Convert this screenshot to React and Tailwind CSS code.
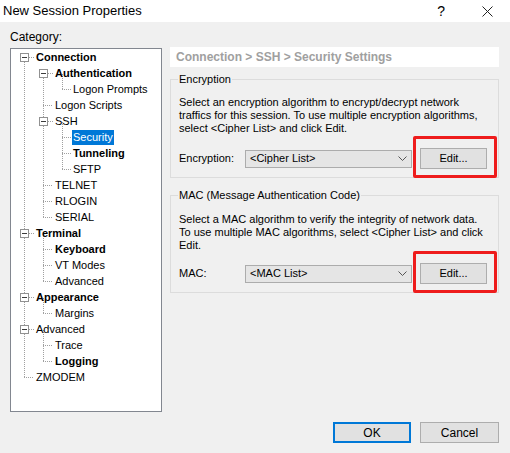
import React from "react";

const rows = [
  { t: "Connection", l: 0, b: true },
  { t: "Authentication", l: 1, b: true },
  { t: "Logon Prompts", l: 2 },
  { t: "Logon Scripts", l: 1 },
  { t: "SSH", l: 1 },
  { t: "Security", l: 2, sel: true },
  { t: "Tunneling", l: 2, b: true },
  { t: "SFTP", l: 2 },
  { t: "TELNET", l: 1 },
  { t: "RLOGIN", l: 1 },
  { t: "SERIAL", l: 1 },
  { t: "Terminal", l: 0, b: true },
  { t: "Keyboard", l: 1, b: true },
  { t: "VT Modes", l: 1 },
  { t: "Advanced", l: 1 },
  { t: "Appearance", l: 0, b: true },
  { t: "Margins", l: 1 },
  { t: "Advanced", l: 0 },
  { t: "Trace", l: 1 },
  { t: "Logging", l: 1, b: true },
  { t: "ZMODEM", l: 0 },
];

const indent = ["pl-[24px]", "pl-[43px]", "pl-[61px]"];

const cy = (i) => 8 + 16 * i + 0.5;

// tree connector lines + expander boxes
const TreeLines = () => {
  const v = [
    [13, 0, 20],
    [32, 1, 10],
    [32, 11, 14],
    [32, 15, 16],
    [32, 17, 19],
    [51, 1, 2],
    [51, 4, 7],
  ];
  const h = [
    [18, 23, [0, 11, 15, 17]],
    [13, 23, [20]],
    [37, 42, [1, 4]],
    [32, 42, [3, 8, 9, 10, 12, 13, 14, 16, 18, 19]],
    [51, 60, [2, 5, 6, 7]],
  ];
  const boxes = [
    [9, 0], [9, 11], [9, 15], [9, 17],
    [28, 1], [28, 4],
  ];
  return (
    <svg className="absolute inset-0 pointer-events-none" width="150" height="362" shapeRendering="crispEdges">
      {v.map(([x, a, b], k) => (
        <line key={"v" + k} x1={x + 0.5} x2={x + 0.5} y1={cy(a)} y2={cy(b)} stroke="#a0a0a0" strokeDasharray="1 1" />
      ))}
      {h.flatMap(([x1, x2, list], k) =>
        list.map((i) => (
          <line key={"h" + k + "-" + i} x1={x1} x2={x2} y1={cy(i)} y2={cy(i)} stroke="#a0a0a0" strokeDasharray="1 1" />
        ))
      )}
      {boxes.map(([x, i], k) => (
        <g key={"b" + k}>
          <rect x={x + 0.5} y={cy(i) - 4} width="8" height="8" fill="#fff" stroke="#919191" />
          <line x1={x + 2} x2={x + 7} y1={cy(i)} y2={cy(i)} stroke="#3c3c3c" />
        </g>
      ))}
    </svg>
  );
};

const Chevron = () => (
  <svg width="9" height="5" viewBox="0 0 9 5" className="mr-[4px]">
    <polyline points="0.5,0.5 4.5,4.5 8.5,0.5" fill="none" stroke="#555" />
  </svg>
);

const Row = ({ label, value }) => (
  <div className="flex items-center h-[21px]">
    <span className="w-[66px]">{label}</span>
    <div className="w-[167px] h-[18px] border border-[#acacac] bg-[#e5e5e5] flex items-center justify-between pl-[4px]">
      <span>{value}</span>
      <Chevron />
    </div>
    <div className="relative ml-[8px]">
      <button className="w-[67px] h-[21px] border border-[#adadad] bg-[#e1e1e1] text-black">Edit...</button>
      <div className="absolute -left-[7px] -top-[12px] -right-[10px] -bottom-[9px] border-[3px] border-[#ee1c1c] rounded-[2px]" />
    </div>
  </div>
);

export default function App() {
  return (
    <div className="w-[510px] h-[453px] bg-[#f0f0f0] flex flex-col font-['Liberation_Sans',Arial,sans-serif] text-[11px] text-black overflow-hidden">
      <div className="h-[22px] bg-white flex items-center shrink-0">
        <span className="pl-[3px] text-[13px] flex-1">New Session Properties</span>
        <span className="text-[14px] mr-[37px]">?</span>
        <svg width="11" height="11" viewBox="0 0 11 11" className="mr-[17px]">
          <path d="M0.5 0.5 L10.5 10.5 M10.5 0.5 L0.5 10.5" stroke="#222" strokeWidth="1" />
        </svg>
      </div>

      <div className="flex flex-1">
        <div className="pl-[10px] pt-[8px] flex flex-col">
          <div className="h-[14px] leading-[14px] text-[12px]">Category:</div>
          <div className="relative mt-[4px] w-[152px] h-[364px] border border-[#828790] bg-white">
            <TreeLines />
            <div className="relative flex flex-col">
              {rows.map((r, i) => (
                <div key={i} className={`h-[16px] flex items-center ${indent[r.l]}`}>
                  <span
                    className={`px-px leading-[15px] ${r.b ? "font-bold" : ""} ${
                      r.sel ? "bg-[#0078d7] text-white" : ""
                    }`}
                  >
                    {r.t}
                  </span>
                </div>
              ))}
            </div>
          </div>
        </div>

        <div className="ml-[8px] w-[329px] pt-[25px] flex flex-col">
          <div className="h-[20px] bg-white flex items-center pl-[6px] text-[12px] font-bold text-[#a0a0a0]">
            Connection &gt; SSH &gt; Security Settings
          </div>

          <fieldset className="mt-[6px] border border-[#dcdcdc] px-[8px] pb-[8px]">
            <legend className="ml-[-1px] px-[1px] leading-[13px]">Encryption</legend>
            <p className="mt-[10px] leading-[13px]">
              Select an encryption algorithm to encrypt/decrypt network traffics for this session. To use multiple
              encryption algorithms, select &lt;Cipher List&gt; and click Edit.
            </p>
            <div className="mt-[13px]">
              <Row label="Encryption:" value="<Cipher List>" />
            </div>
          </fieldset>

          <fieldset className="mt-[11px] border border-[#dcdcdc] px-[8px] pb-[8px]">
            <legend className="ml-[-1px] px-[1px] leading-[13px]">MAC (Message Authentication Code)</legend>
            <p className="mt-[11px] leading-[13px]">
              Select a MAC algorithm to verify the integrity of network data. To use multiple MAC algorithms, select
              &lt;Cipher List&gt; and click Edit.
            </p>
            <div className="mt-[11px]">
              <Row label="MAC:" value="<MAC List>" />
            </div>
          </fieldset>
        </div>
      </div>

      <div className="flex justify-end gap-[9px] pr-[11px] pb-[10px] shrink-0">
        <button className="w-[78px] h-[21px] border-2 border-[#0078d7] bg-[#e1e1e1] text-[12px]">OK</button>
        <button className="w-[79px] h-[21px] border border-[#adadad] bg-[#e1e1e1] text-[12px]">Cancel</button>
      </div>
    </div>
  );
}
